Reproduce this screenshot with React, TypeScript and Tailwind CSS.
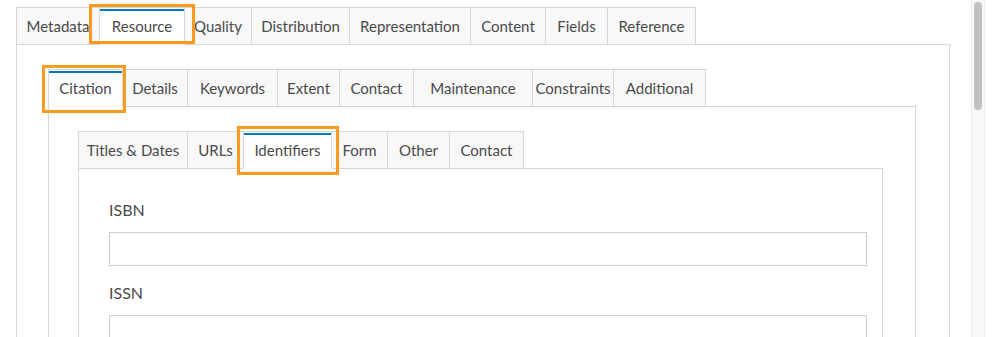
import React from "react";

type Tab = { label: string; w: number; active?: boolean; mark?: string };

const outerTabs: Tab[] = [
    { label: "Metadata", w: 84 },
    { label: "Resource", w: 85, active: true, mark: "left-[-11px] top-[-4px] w-[106px] h-[40px]" },
    { label: "Quality", w: 67 },
    { label: "Distribution", w: 98 },
    { label: "Representation", w: 121 },
    { label: "Content", w: 75 },
    { label: "Fields", w: 62 },
    { label: "Reference", w: 88 },
];

const middleTabs: Tab[] = [
    { label: "Citation", w: 75, active: true, mark: "left-[-7px] top-[-5px] w-[84px] h-[48px]" },
    { label: "Details", w: 65 },
    { label: "Keywords", w: 90 },
    { label: "Extent", w: 62 },
    { label: "Contact", w: 74 },
    { label: "Maintenance", w: 119 },
    { label: "Constraints", w: 81 },
    { label: "Additional", w: 92 },
];

const innerTabs: Tab[] = [
    { label: "Titles & Dates", w: 110 },
    { label: "URLs", w: 56 },
    { label: "Identifiers", w: 88, active: true, mark: "left-[-7px] top-[-6px] w-[102px] h-[49px]" },
    { label: "Form", w: 56 },
    { label: "Other", w: 62 },
    { label: "Contact", w: 74 },
];

const TabRow = ({ tabs }: { tabs: Tab[] }) => (
    <div className="flex">
        {tabs.map((t, i) => (
            <div
                key={t.label}
                style={{ width: t.w }}
                className={
                    "relative -mb-px flex h-[38px] items-center justify-center border-t border-r border-b border-[#d6d6d6] text-[15px] " +
                    (i === 0 ? "border-l " : "") +
                    (t.active ? "z-10 bg-white border-b-white" : "bg-[#f8f8f8]")
                }
            >
                {t.active && <div className="absolute left-0 right-0 top-[1px] h-[2px] bg-[#0079c1]" />}
                <span>{t.label}</span>
                {t.mark && (
                    <div className={"pointer-events-none absolute z-20 border-[3px] border-[#fa9a1e] " + t.mark} />
                )}
            </div>
        ))}
    </div>
);

const Field = ({ label, first }: { label: string; first?: boolean }) => (
    <div className={first ? "" : "mt-[15px]"}>
        <label className="block text-[16px] leading-[24px] mb-[10px]">{label}</label>
        <input
            type="text"
            className="block h-[34px] w-full border border-[#cfcfcf] bg-white px-2 outline-none"
        />
    </div>
);

export default function App() {
    return (
        <div
            className="flex h-[337px] overflow-hidden bg-white text-[#4a4a4a]"
            style={{ fontFamily: "Lato, 'Open Sans', sans-serif" }}
        >
            <div className="flex-1 pl-4 pt-[7px] pr-[21px]">
                <TabRow tabs={outerTabs} />
                <div className="h-[400px] border-x border-t border-[#d6d6d6] pl-[31px] pr-[33px] pt-[24px]">
                    <TabRow tabs={middleTabs} />
                    <div className="h-[300px] border-x border-t border-[#d6d6d6] pl-[29px] pr-[32px] pt-[24px]">
                        <TabRow tabs={innerTabs} />
                        <div className="h-[200px] border-x border-t border-[#d6d6d6] pl-[30px] pr-[15px] pt-[29px]">
                            <Field label="ISBN" first />
                            <Field label="ISSN" />
                        </div>
                    </div>
                </div>
            </div>

            {/* scrollbar */}
            <div className="mr-[14px] w-[14px] border-x border-[#ededed] bg-[#f8f8f8] px-[2px] pt-[2px]">
                <div className="h-[108px] rounded-full bg-[#c1c1c1]" />
            </div>
        </div>
    );
}
